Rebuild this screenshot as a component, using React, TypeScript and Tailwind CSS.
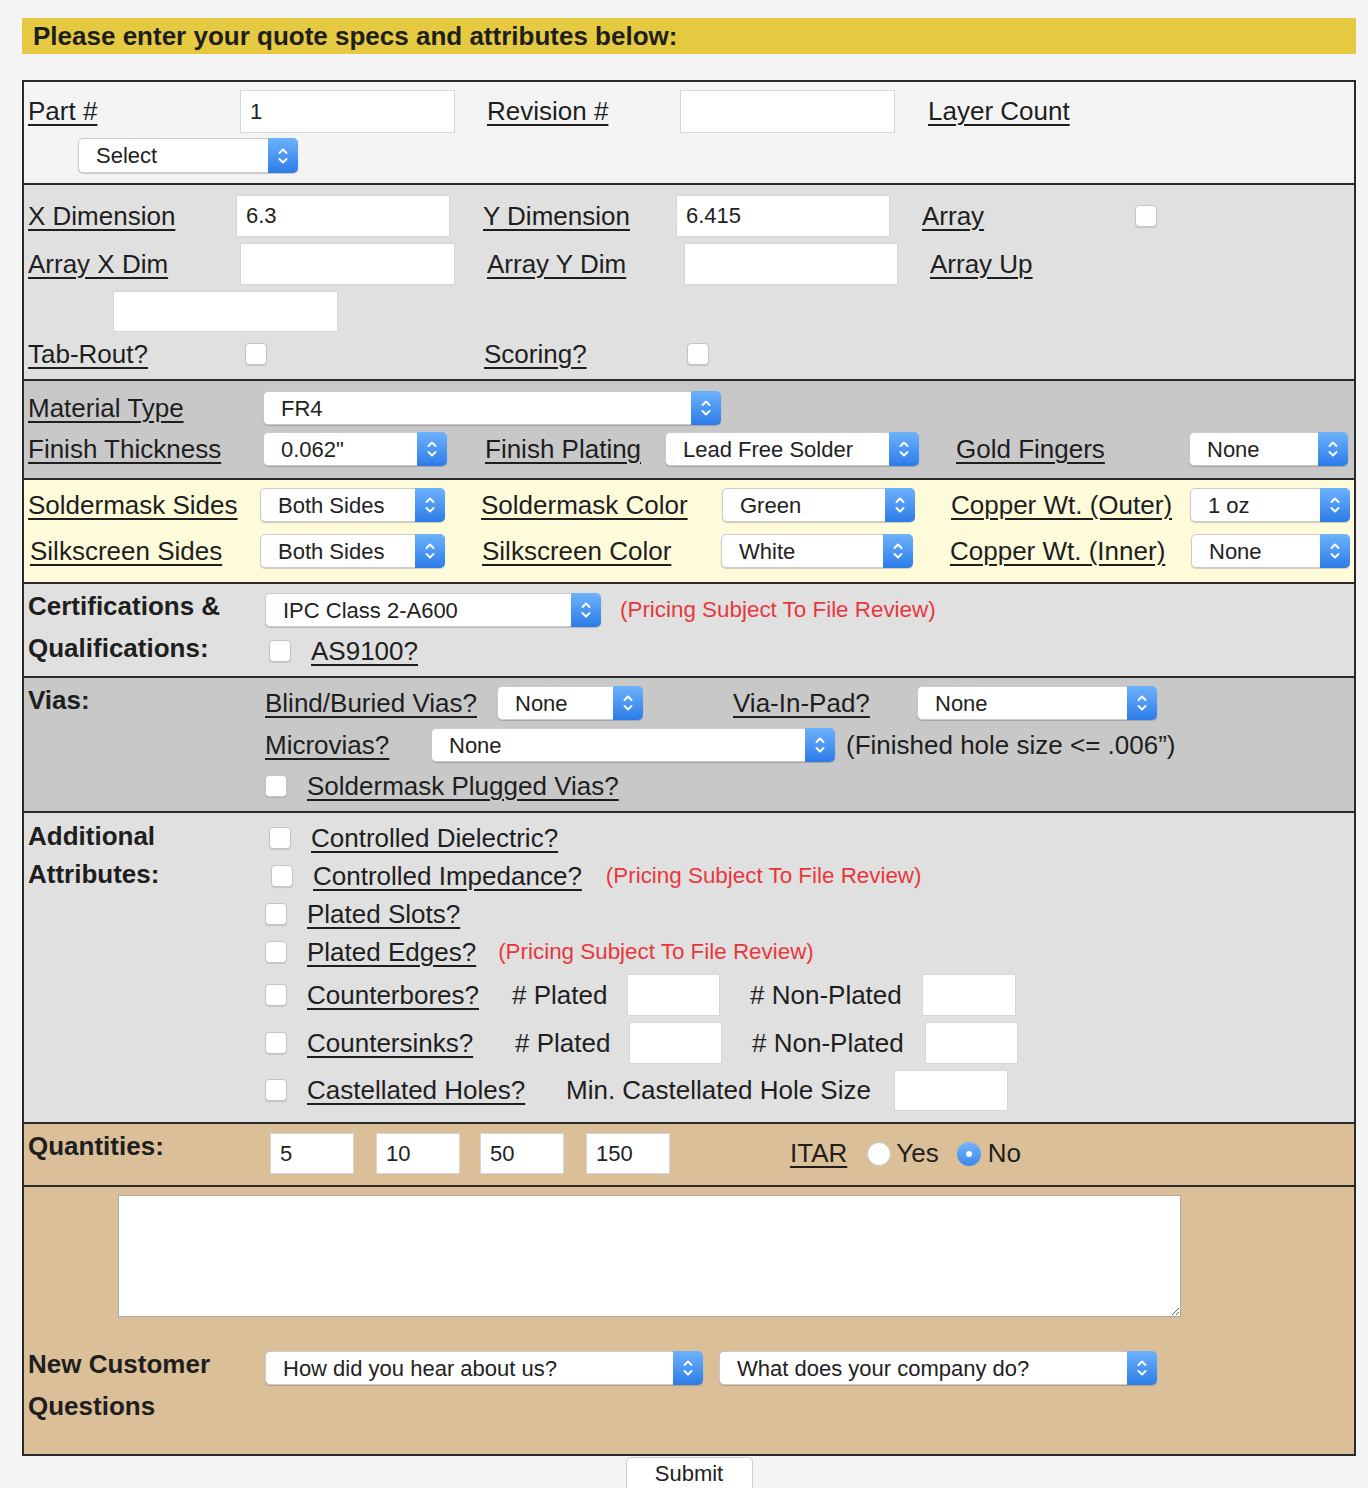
import React from "react";

const L = ({ children }: { children: React.ReactNode }) => (
    <span className="underline decoration-[1.5px] underline-offset-[4px]">{children}</span>
)

const Box = ({ className, value }: { className: string; value?: string }) => (
    <input
        defaultValue={value}
        className={`shrink-0 bg-white border border-[#d6d6d6] pl-[9px] text-[22px] text-[#222] outline-none ${className}`}
    />
)

const Check = ({ className = "" }: { className?: string }) => (
    <div className={`h-[22px] w-[22px] shrink-0 rounded-[4px] border border-[#c4c4c4] bg-white shadow-[0_1px_1px_rgba(0,0,0,0.12)] ${className}`} />
)

const Select = ({ value, className }: { value: string; className: string }) => (
    <div className={`flex h-[34px] shrink-0 items-stretch rounded-[5px] border border-[#cbcbcb] bg-white shadow-[0_1px_1px_rgba(0,0,0,0.18)] ${className}`}>
        <div className="flex flex-1 items-center overflow-hidden whitespace-nowrap pl-[17px] text-[22px] text-[#222]">{value}</div>
        <div className="-my-px -mr-px flex w-[30px] items-center justify-center rounded-r-[5px] bg-gradient-to-b from-[#6cb2fb] to-[#2c7ce8]">
            <svg width="12" height="22" viewBox="0 0 12 22" fill="none" stroke="white" strokeWidth="1.9" strokeLinecap="round" strokeLinejoin="round">
                <path d="M2.5 8 L6 4.5 L9.5 8" />
                <path d="M2.5 14 L6 17.5 L9.5 14" />
            </svg>
        </div>
    </div>
)

const Red = ({ children, className = "" }: { children: React.ReactNode; className?: string }) => (
    <span className={`text-[22.4px] text-[#e8373c] ${className}`}>{children}</span>
)

const Radio = ({ on }: { on?: boolean }) => on ? (
    <div className="flex h-[24px] w-[24px] shrink-0 items-center justify-center rounded-full bg-gradient-to-b from-[#74b6fb] to-[#3a86ec]">
        <div className="h-[6px] w-[6px] rounded-full bg-white" />
    </div>
) : (
    <div className="h-[24px] w-[24px] shrink-0 rounded-full border border-[#c8c8c8] bg-white" />
)

export default function App() {
    return (
        <div className="min-h-[1488px] bg-[#f4f4f4] pt-[18px] font-['Liberation_Sans',Arial,Helvetica,sans-serif] text-[26px] text-[#1e1e1e]">
            <div className="ml-[22px] w-[1334px]">
                <div className="flex h-[36px] items-center bg-[#e5c940] pl-[11px] font-bold">
                    Please enter your quote specs and attributes below:
                </div>

                <div className="mt-[26px] border-2 border-[#2a2a2a]">
                    {/* part / revision */}
                    <div className="bg-[#f4f4f4] pb-[10px] pl-[4px] pt-[8px]">
                        <div className="flex h-[43px] items-center">
                            <div className="w-[212px]"><L>Part #</L></div>
                            <Box className="h-[43px] w-[215px]" value="1" />
                            <div className="ml-[32px] w-[193px]"><L>Revision #</L></div>
                            <Box className="h-[43px] w-[215px]" />
                            <div className="ml-[33px]"><L>Layer Count</L></div>
                        </div>
                        <div className="mt-[5px] flex pl-[50px]">
                            <Select className="h-[35px] w-[220px]" value="Select" />
                        </div>
                    </div>

                    {/* dimensions */}
                    <div className="border-t-2 border-[#2a2a2a] bg-[#e0e0e0] pb-[11px] pl-[4px] pt-[10px]">
                        <div className="flex h-[42px] items-center">
                            <div className="w-[208px]"><L>X Dimension</L></div>
                            <Box className="h-[42px] w-[214px]" value="6.3" />
                            <div className="ml-[33px] w-[193px]"><L>Y Dimension</L></div>
                            <Box className="h-[42px] w-[214px]" value="6.415" />
                            <div className="ml-[32px] w-[213px]"><L>Array</L></div>
                            <Check />
                        </div>
                        <div className="mt-[6px] flex h-[42px] items-center">
                            <div className="w-[212px]"><L>Array X Dim</L></div>
                            <Box className="h-[42px] w-[215px]" />
                            <div className="ml-[32px] w-[197px]"><L>Array Y Dim</L></div>
                            <Box className="h-[42px] w-[214px]" />
                            <div className="ml-[32px]"><L>Array Up</L></div>
                        </div>
                        <div className="mt-[6px] flex pl-[85px]">
                            <Box className="h-[41px] w-[225px]" />
                        </div>
                        <div className="mt-[8px] flex h-[28px] items-center">
                            <div className="w-[217px]"><L>Tab-Rout?</L></div>
                            <Check />
                            <div className="ml-[217px] w-[203px]"><L>Scoring?</L></div>
                            <Check />
                        </div>
                    </div>

                    {/* material */}
                    <div className="border-t-2 border-[#2a2a2a] bg-[#c8c8c8] pb-[12px] pl-[4px] pt-[10px]">
                        <div className="flex h-[34px] items-center">
                            <div className="w-[235px]"><L>Material Type</L></div>
                            <Select className="w-[458px]" value="FR4" />
                        </div>
                        <div className="mt-[7px] flex h-[34px] items-center">
                            <div className="w-[235px]"><L>Finish Thickness</L></div>
                            <Select className="w-[184px]" value={'0.062"'} />
                            <div className="ml-[38px] w-[180px]"><L>Finish Plating</L></div>
                            <Select className="w-[254px]" value="Lead Free Solder" />
                            <div className="ml-[37px] w-[233px]"><L>Gold Fingers</L></div>
                            <Select className="w-[159px]" value="None" />
                        </div>
                    </div>

                    {/* soldermask */}
                    <div className="border-t-2 border-[#2a2a2a] bg-[#fdfbd9] pb-[14px] pl-[4px] pt-[8px]">
                        <div className="flex h-[34px] items-center">
                            <div className="w-[232px]"><L>Soldermask Sides</L></div>
                            <Select className="w-[185px]" value="Both Sides" />
                            <div className="ml-[36px] w-[241px]"><L>Soldermask Color</L></div>
                            <Select className="w-[193px]" value="Green" />
                            <div className="ml-[36px] w-[239px]"><L>Copper Wt. (Outer)</L></div>
                            <Select className="w-[160px]" value="1 oz" />
                        </div>
                        <div className="mt-[12px] flex h-[34px] items-center">
                            <div className="ml-[2px] w-[230px]"><L>Silkscreen Sides</L></div>
                            <Select className="w-[185px]" value="Both Sides" />
                            <div className="ml-[37px] w-[239px]"><L>Silkscreen Color</L></div>
                            <Select className="w-[192px]" value="White" />
                            <div className="ml-[37px] w-[241px]"><L>Copper Wt. (Inner)</L></div>
                            <Select className="w-[159px]" value="None" />
                        </div>
                    </div>

                    {/* certifications */}
                    <div className="flex h-[94px] border-t-2 border-[#2a2a2a] bg-[#e0e0e0] pl-[4px]">
                        <div className="w-[237px] pt-[1px] font-bold leading-[42px]">
                            <div>Certifications &amp;</div>
                            <div>Qualifications:</div>
                        </div>
                        <div className="pt-[9px]">
                            <div className="flex h-[34px] items-center">
                                <Select className="w-[336px]" value="IPC Class 2-A600" />
                                <Red className="ml-[19px]">(Pricing Subject To File Review)</Red>
                            </div>
                            <div className="mt-[13px] flex h-[22px] items-center">
                                <Check className="ml-[4px]" />
                                <div className="ml-[20px]"><L>AS9100?</L></div>
                            </div>
                        </div>
                    </div>

                    {/* vias */}
                    <div className="flex h-[135px] border-t-2 border-[#2a2a2a] bg-[#c8c8c8] pl-[4px]">
                        <div className="w-[237px] pt-[1px] font-bold leading-[42px]">Vias:</div>
                        <div className="pt-[8px]">
                            <div className="flex h-[34px] items-center">
                                <div className="w-[232px]"><L>Blind/Buried Vias?</L></div>
                                <Select className="w-[146px]" value="None" />
                                <div className="ml-[90px] w-[184px]"><L>Via-In-Pad?</L></div>
                                <Select className="w-[240px]" value="None" />
                            </div>
                            <div className="mt-[8px] flex h-[34px] items-center">
                                <div className="w-[166px]"><L>Microvias?</L></div>
                                <Select className="w-[404px]" value="None" />
                                <div className="ml-[11px]">(Finished hole size &lt;= .006&rdquo;)</div>
                            </div>
                            <div className="mt-[13px] flex h-[22px] items-center">
                                <Check />
                                <div className="ml-[20px]"><L>Soldermask Plugged Vias?</L></div>
                            </div>
                        </div>
                    </div>

                    {/* additional attributes */}
                    <div className="flex h-[311px] border-t-2 border-[#2a2a2a] bg-[#e0e0e0] pl-[4px]">
                        <div className="w-[237px] pt-[4px] font-bold leading-[38px]">
                            <div>Additional</div>
                            <div>Attributes:</div>
                        </div>
                        <div className="pt-[6px]">
                            <div className="flex h-[38px] items-center">
                                <Check className="ml-[4px]" />
                                <div className="ml-[20px]"><L>Controlled Dielectric?</L></div>
                            </div>
                            <div className="flex h-[38px] items-center">
                                <Check className="ml-[6px]" />
                                <div className="ml-[20px]"><L>Controlled Impedance?</L></div>
                                <Red className="ml-[24px]">(Pricing Subject To File Review)</Red>
                            </div>
                            <div className="flex h-[38px] items-center">
                                <Check />
                                <div className="ml-[20px]"><L>Plated Slots?</L></div>
                            </div>
                            <div className="flex h-[38px] items-center">
                                <Check />
                                <div className="ml-[20px]"><L>Plated Edges?</L></div>
                                <Red className="ml-[22px]">(Pricing Subject To File Review)</Red>
                            </div>
                            <div className="mt-[3px] flex h-[42px] items-center">
                                <Check />
                                <div className="ml-[20px] w-[205px]"><L>Counterbores?</L></div>
                                <div className="w-[115px]"># Plated</div>
                                <Box className="h-[42px] w-[93px]" />
                                <div className="ml-[30px] w-[172px]"># Non-Plated</div>
                                <Box className="h-[42px] w-[94px]" />
                            </div>
                            <div className="mt-[6px] flex h-[42px] items-center">
                                <Check />
                                <div className="ml-[20px] w-[208px]"><L>Countersinks?</L></div>
                                <div className="w-[114px]"># Plated</div>
                                <Box className="h-[42px] w-[93px]" />
                                <div className="ml-[30px] w-[173px]"># Non-Plated</div>
                                <Box className="h-[42px] w-[93px]" />
                            </div>
                            <div className="mt-[5px] flex h-[42px] items-center">
                                <Check />
                                <div className="ml-[20px] w-[259px]"><L>Castellated Holes?</L></div>
                                <div className="w-[328px]">Min. Castellated Hole Size</div>
                                <Box className="h-[41px] w-[114px]" />
                            </div>
                        </div>
                    </div>

                    {/* quantities */}
                    <div className="flex h-[63px] border-t-2 border-[#2a2a2a] bg-[#dbbf98] pl-[4px]">
                        <div className="w-[242px] pt-[1px] font-bold leading-[42px]">Quantities:</div>
                        <div className="flex h-[50px] items-center pt-[9px]">
                            <Box className="h-[41px] w-[84px]" value="5" />
                            <Box className="ml-[22px] h-[41px] w-[84px]" value="10" />
                            <Box className="ml-[20px] h-[41px] w-[84px]" value="50" />
                            <Box className="ml-[22px] h-[41px] w-[84px]" value="150" />
                            <div className="ml-[120px]"><L>ITAR</L></div>
                            <div className="ml-[20px]"><Radio /></div>
                            <div className="ml-[5px]">Yes</div>
                            <div className="ml-[18px]"><Radio on /></div>
                            <div className="ml-[7px]">No</div>
                        </div>
                    </div>

                    {/* comments + new customer */}
                    <div className="h-[269px] border-t-2 border-[#2a2a2a] bg-[#dbbf98] pl-[4px] pt-[8px]">
                        <div className="pl-[90px]">
                            <textarea className="block h-[122px] w-[1063px] border border-[#a9a9a9] bg-white outline-none" />
                        </div>
                        <div className="mt-[26px] flex">
                            <div className="w-[237px] font-bold leading-[42px]">
                                <div>New Customer</div>
                                <div>Questions</div>
                            </div>
                            <div className="flex pt-[8px]">
                                <Select className="w-[438px]" value="How did you hear about us?" />
                                <Select className="ml-[16px] w-[438px]" value="What does your company do?" />
                            </div>
                        </div>
                    </div>
                </div>

                <div className="flex justify-center">
                    <button className="mt-px h-[31px] w-[127px] rounded-t-[5px] border border-b-0 border-[#d0d0d0] bg-white pt-[2px] text-[22px] leading-[26px] text-[#222]">Submit</button>
                </div>
            </div>
        </div>
    )
}
